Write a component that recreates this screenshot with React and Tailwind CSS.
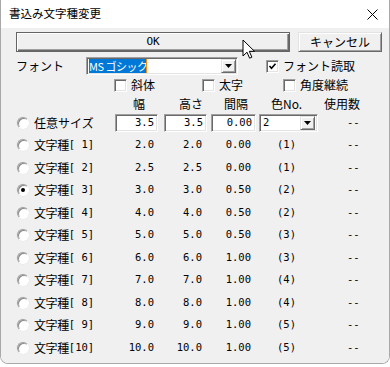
import React from 'react';

const jp = "font-['Noto_Sans_CJK_JP',sans-serif]";
const mono = "font-['DejaVu_Sans_Mono','Liberation_Mono',monospace]";
const sunken =
  'bg-white border border-t-[#a0a0a0] border-l-[#a0a0a0] border-b-white border-r-white shadow-[inset_1px_1px_0_#696969,inset_-1px_-1px_0_#e3e3e3]';
const raised =
  'bg-[#f0f0f0] border border-t-[#e3e3e3] border-l-[#e3e3e3] border-b-[#696969] border-r-[#696969] shadow-[inset_1px_1px_0_#ffffff,inset_-1px_-1px_0_#a0a0a0]';

const rows = [
  [1, '2.0', '2.0', '0.00', '(1)'],
  [2, '2.5', '2.5', '0.00', '(1)'],
  [3, '3.0', '3.0', '0.50', '(2)'],
  [4, '4.0', '4.0', '0.50', '(2)'],
  [5, '5.0', '5.0', '0.50', '(3)'],
  [6, '6.0', '6.0', '1.00', '(3)'],
  [7, '7.0', '7.0', '1.00', '(4)'],
  [8, '8.0', '8.0', '1.00', '(4)'],
  [9, '9.0', '9.0', '1.00', '(5)'],
  [10, '10.0', '10.0', '1.00', '(5)'],
];

function DropButton({ className = '' }) {
  return (
    <div className={`${raised} w-[15px] h-full flex items-center justify-center ${className}`}>
      <svg width="7" height="4" viewBox="0 0 7 4">
        <path d="M0 0h7L3.5 4z" fill="#000" />
      </svg>
    </div>
  );
}

function Checkbox({ checked, label, className = '' }) {
  return (
    <div className={`flex items-center ${className}`}>
      <div className={`${sunken} w-[13px] h-[13px] flex items-center justify-center`}>
        {checked && (
          <svg width="9" height="9" viewBox="0 0 9 9">
            <path d="M1.5 4l2 2.2L7.5 1.8" stroke="#000" strokeWidth="1.6" fill="none" />
          </svg>
        )}
      </div>
      <span className={`${jp} text-[12px] ml-[4px] leading-none`}>{label}</span>
    </div>
  );
}

function Radio({ checked }) {
  return (
    <div className="w-[12px] h-[12px] rounded-full bg-white border border-t-[#a0a0a0] border-l-[#a0a0a0] border-b-[#ffffff] border-r-[#ffffff] shadow-[inset_1px_1px_0_#8a8a8a,0_0_0_0.5px_#e3e3e3] flex items-center justify-center">
      {checked && <div className="w-[4px] h-[4px] rounded-full bg-black" />}
    </div>
  );
}

function NumInput({ value, className = '' }) {
  return (
    <div className={`${sunken} h-[18px] flex items-center justify-end pr-[3px] ${mono} text-[10.5px] ${className}`}>
      {value}
    </div>
  );
}

export default function App() {
  return (
    <div className="w-[390px] h-[367px] bg-white relative overflow-hidden text-black select-none">
      <div className="h-[364px] flex flex-col rounded-b-[8px] border border-t-0 border-[#a8a8a8] overflow-hidden">
        {/* title bar */}
        <div className="h-[28px] bg-white flex items-center justify-between pl-[8px] pr-[11px]">
          <span className={`${jp} text-[11.5px]`}>書込み文字種変更</span>
          <svg width="11" height="11" viewBox="0 0 11 11">
            <path d="M0.5 0.5l10 10M10.5 0.5l-10 10" stroke="#000" strokeWidth="1" />
          </svg>
        </div>

        <div className="flex-1 bg-[#f0f0f0] flex flex-col">
          {/* buttons */}
          <div className="flex mt-[4px] h-[20px] pl-[15px]">
            <div className="w-[274px] h-full bg-[#f0f0f0] border border-[#646464] shadow-[inset_1px_1px_0_#ffffff,inset_-1px_-1px_0_#696969,inset_-2px_-2px_0_#a0a0a0] flex items-center justify-center">
              <span className={`${mono} text-[11px]`}>OK</span>
            </div>
            <div className={`${raised} w-[84px] h-full ml-[8px] flex items-center justify-center`}>
              <span className={`${jp} text-[12px]`}>キャンセル</span>
            </div>
          </div>

          {/* font row */}
          <div className="flex items-center mt-[5px] h-[18px]">
            <span className={`${jp} text-[12px] ml-[15px] w-[70px]`}>フォント</span>
            <div className={`${sunken} w-[152px] h-full flex items-center pl-[2px] pr-[1px] py-[1px]`}>
              <div className="h-[14px] w-[58px] bg-[#0078d7] text-white flex items-center border-r border-[#ff8c00]">
                <span className={`${jp} text-[11px] tracking-[-0.5px] whitespace-nowrap overflow-hidden`}>MS ゴシック</span>
              </div>
              <div className="flex-1" />
              <DropButton />
            </div>
            <Checkbox checked label="フォント読取" className="ml-[28px]" />
          </div>

          {/* style checkboxes */}
          <div className="flex items-center mt-[3px] h-[14px]">
            <Checkbox label="斜体" className="ml-[113px]" />
            <Checkbox label="太字" className="ml-[47px]" />
            <Checkbox label="角度継続" className="ml-[40px]" />
          </div>

          {/* header */}
          <div className={`flex items-center mt-[3px] h-[17px] ${jp} text-[12px]`}>
            <div className="w-[114px]" />
            <div className="w-[49px] pl-[18px]">幅</div>
            <div className="w-[49px] pl-[15px]">高さ</div>
            <div className="w-[46px] pl-[11px]">間隔</div>
            <div className="w-[60px] pl-[12px]">色No.</div>
            <div className="pl-[5px]">使用数</div>
          </div>

          {/* custom size */}
          <div className="flex items-center h-[21px]">
            <div className="w-[114px] flex items-center pl-[16px]">
              <Radio />
              <span className={`${jp} text-[12px] ml-[5px]`}>任意サイズ</span>
            </div>
            <NumInput value="3.5" className="w-[43px]" />
            <NumInput value="3.5" className="w-[43px] ml-[6px]" />
            <NumInput value="0.00" className="w-[45px] ml-[4px]" />
            <div className={`${sunken} w-[59px] h-[18px] ml-[3px] flex items-center pl-[3px] pr-[2px] py-[1px]`}>
              <span className={`${mono} text-[10.5px] flex-1`}>2</span>
              <DropButton />
            </div>
            <span className={`${mono} text-[10.5px] ml-[29px]`}>--</span>
          </div>

          {/* types */}
          <div className="flex flex-col mt-[1px]">
            {rows.map(([n, w, h, sp, col]) => (
              <div key={n} className="flex items-center h-[22.5px]">
                <div className="w-[114px] flex items-center pl-[16px]">
                  <Radio checked={n === 3} />
                  <span className={`${jp} text-[12px] ml-[5px] tracking-[-0.4px]`}>文字種</span>
                  <span className={`${mono} text-[10.5px] whitespace-pre`}>{n < 10 ? `[ ${n}]` : `[${n}]`}</span>
                </div>
                <div className={`w-[43px] text-right pr-[4px] ${mono} text-[10.5px]`}>{w}</div>
                <div className={`w-[43px] ml-[6px] text-right pr-[5px] ${mono} text-[10.5px]`}>{h}</div>
                <div className={`w-[43px] ml-[6px] text-right pr-[5px] ${mono} text-[10.5px]`}>{sp}</div>
                <div className={`w-[60px] ml-[3px] pl-[18px] ${mono} text-[10.5px]`}>{col}</div>
                <div className={`pl-[28px] ${mono} text-[10.5px]`}>--</div>
              </div>
            ))}
          </div>
        </div>
      </div>

      {/* mouse pointer */}
      <svg className="absolute left-[242px] top-[39px]" width="14" height="21" viewBox="0 0 14 21">
        <path
          d="M1 1v16l4-3.8 2.6 6 2.3-1-2.6-5.9H12.5z"
          fill="#fff"
          stroke="#000"
          strokeWidth="1"
          strokeLinejoin="round"
        />
      </svg>
    </div>
  );
}
